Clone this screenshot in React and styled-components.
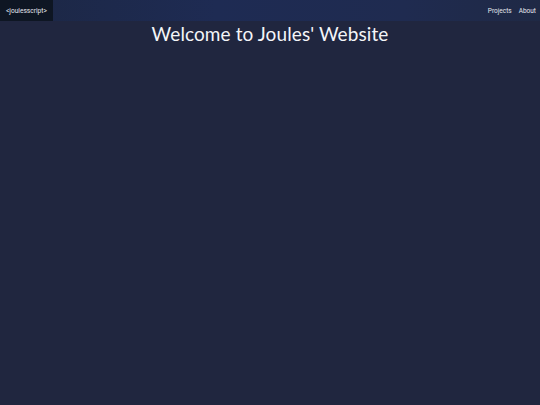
import React from 'react'
import styled, { createGlobalStyle } from 'styled-components'

const GlobalStyle = createGlobalStyle`
  html, body {
    margin: 0;
    padding: 0;
    height: 100%;
    background: #20263f;
  }
  #root {
    min-height: 100vh;
  }
`

export default function App() {
  return (
    <Page>
      <GlobalStyle />
      <Navbar>
        <Brand>&lt;joulesscript&gt;</Brand>
        <NavLinks>
          <NavLink>Projects</NavLink>
          <NavLink>About</NavLink>
        </NavLinks>
      </Navbar>
      <Title>Welcome to Joules' Website</Title>
    </Page>
  )
}

// styled components
const Page = styled.div`
min-height: 100vh;
background: #20263f;
font-family: "Lato", "Liberation Sans", sans-serif;
`

const Navbar = styled.nav`
display: flex;
align-items: stretch;
height: 21px;
background: linear-gradient(90deg, #1c2744 0%, #1e2b53 40%, #1f2b50 75%, #1f2945 100%);
`

const Brand = styled.div`
display: flex;
align-items: center;
padding: 0 6px;
width: 41px;
background: #0e1623;
color: #e6e8ef;
font-family: "Roboto", "Liberation Sans", sans-serif;
font-size: 6.6px;
white-space: nowrap;
`

const NavLinks = styled.ul`
display: flex;
align-items: center;
gap: 7px;
margin: 0 4px 0 auto;
padding: 0;
list-style: none;
`

const NavLink = styled.li`
color: #e6e8ef;
font-family: "Roboto", "Liberation Sans", sans-serif;
font-size: 6.5px;
cursor: pointer;
`

const Title = styled.h1`
margin: 1px 0 0;
text-align: center;
color: #f4f5f8;
font-family: "Lato", "Liberation Sans", sans-serif;
font-weight: 400;
font-size: 19px;
letter-spacing: 0.1px;
`
